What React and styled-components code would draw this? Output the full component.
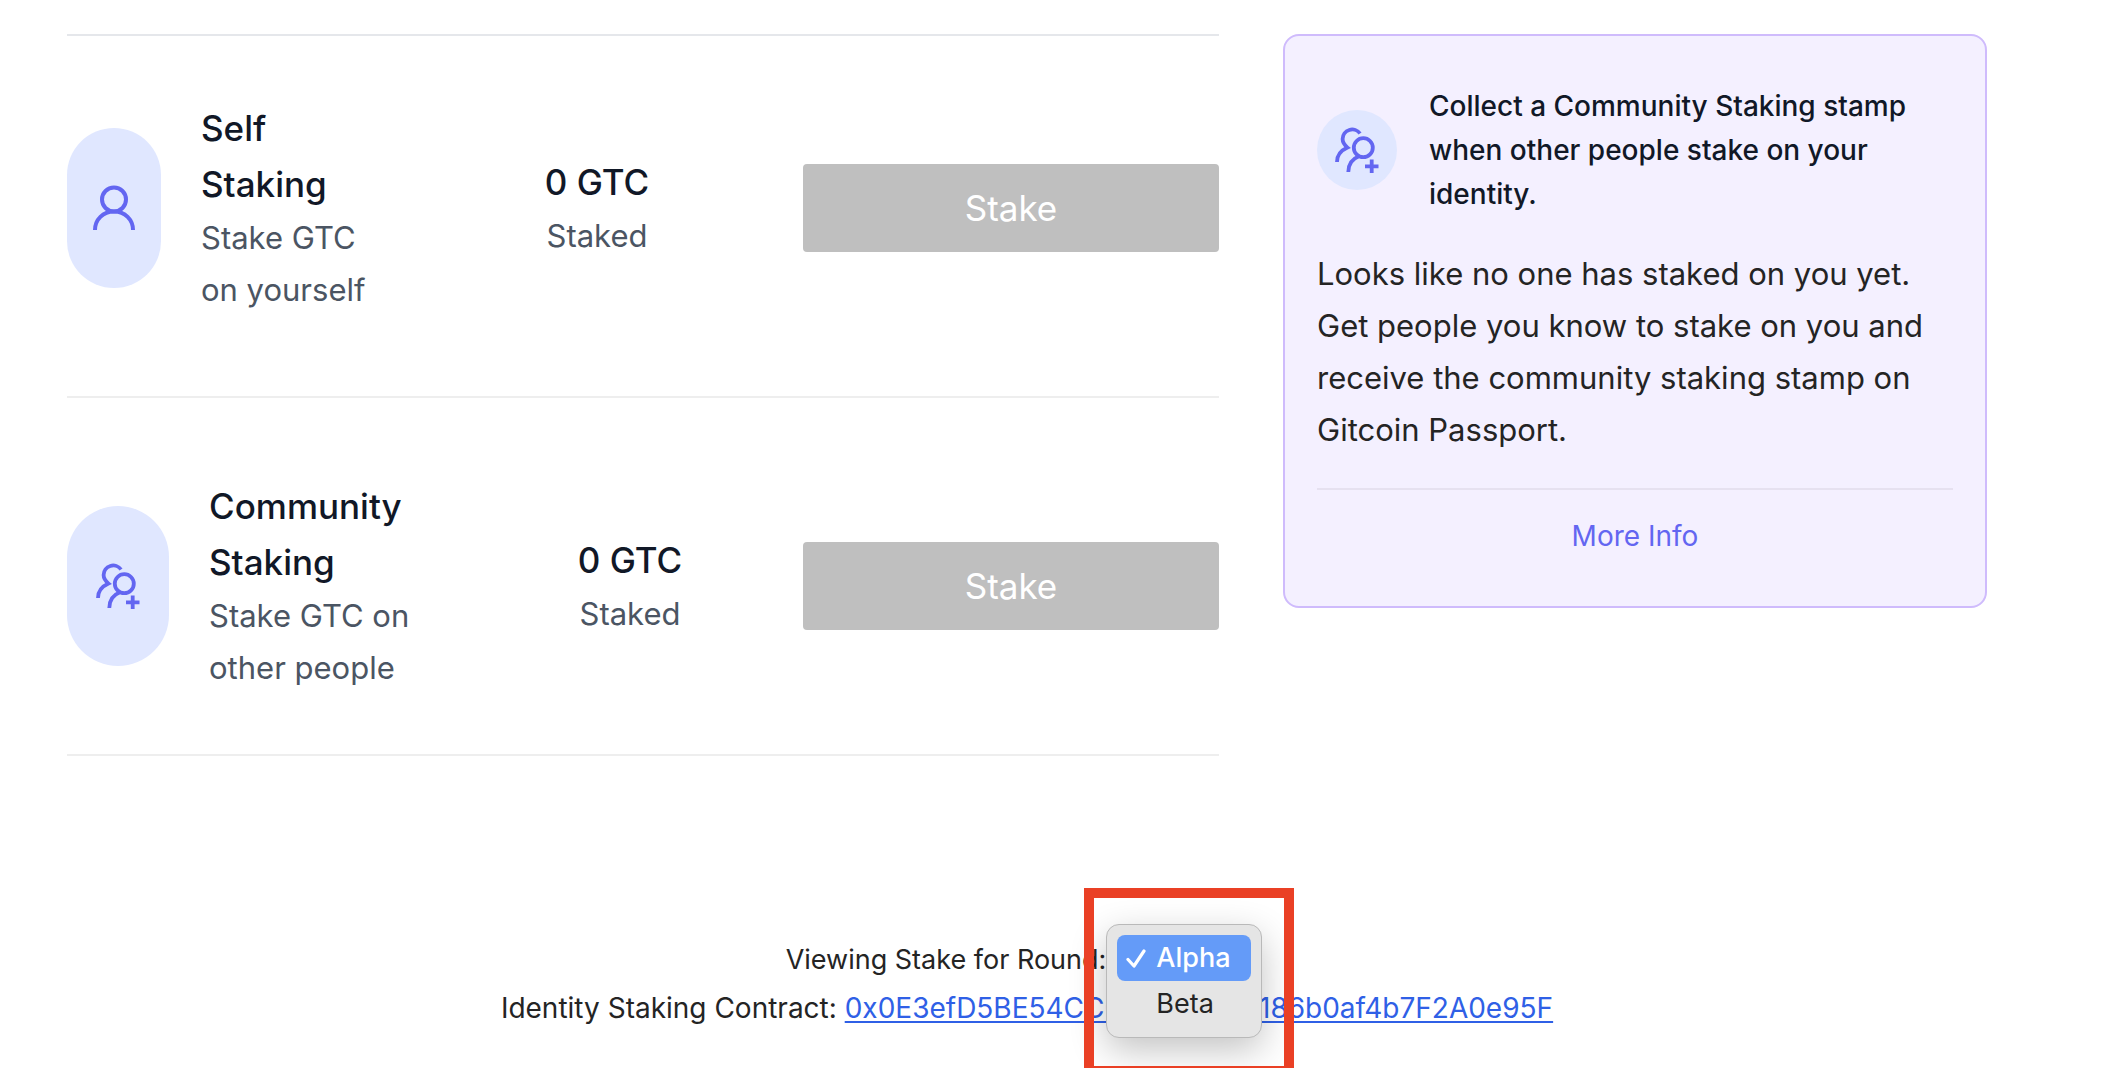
import React from "react";
import styled, { createGlobalStyle } from "styled-components";

const GlobalStyle = createGlobalStyle`
  *, *::before, *::after { box-sizing: border-box; }
  body {
    margin: 0;
    background: #fff;
    color: #242424;
    font-family: Inter, "Liberation Sans", sans-serif;
  }
  h2, h3, p { margin: 0; }
`;

const Page = styled.div`
  height: 100vh;
  overflow: hidden;
  padding: 34px 115px 0 67px;
`;

const Columns = styled.main`
  display: grid;
  grid-template-columns: 1152fr 704fr;
  gap: 64px;
  align-items: start;
`;

const StakeList = styled.section`
  border-top: 2px solid #e5e7eb;
`;

const StakeRow = styled.article`
  display: grid;
  grid-template-columns: ${(p) => p.$iconWidth}px ${(p) => p.$textWidth}px 1fr 416px;
  align-items: center;
  padding: ${(p) => p.$padding};
  border-bottom: 2px solid #eeeeee;
`;

const IconPill = styled.div`
  display: flex;
  align-items: center;
  justify-content: center;
  height: 160px;
  border-radius: 80px;
  background: #e0e7ff;
  color: #6366f1;
`;

const Info = styled.div`
  padding-left: 40px;
`;

const Stat = styled.div`
  padding-left: 20px;
  text-align: center;
`;

const Heading = styled.h2`
  color: #111827;
  font-size: 35px;
  font-weight: 500;
  line-height: 56px;
`;

const Muted = styled.p`
  color: #4b5563;
  font-size: 31px;
  line-height: 52px;
`;

const StakeButton = styled.button`
  height: 88px;
  border: 0;
  border-radius: 4px;
  background: #bfbfbf;
  color: #fff;
  font-family: inherit;
  font-size: 35px;
  line-height: 56px;
`;

const Card = styled.aside`
  padding: 48px 32px;
  border: 2px solid #cfbbfc;
  border-radius: 16px;
  background: #f4f0ff;
`;

const CardHeader = styled.div`
  display: flex;
  align-items: center;
  gap: 32px;
`;

const IconCircle = styled.div`
  display: flex;
  flex: none;
  align-items: center;
  justify-content: center;
  width: 80px;
  height: 80px;
  border-radius: 50%;
  background: #e0e7ff;
  color: #6366f1;
`;

const CardTitle = styled.h3`
  color: #111827;
  font-size: 28px;
  font-weight: 500;
  line-height: 44px;
`;

const CardText = styled.p`
  padding: 32px 0;
  font-size: 31px;
  line-height: 52px;
`;

const CardFooter = styled.div`
  padding-top: 24px;
  border-top: 2px solid #e6e1f0;
  text-align: center;
`;

const MoreLink = styled.a`
  display: block;
  color: #6366f1;
  font-size: 28px;
  line-height: 44px;
  text-decoration: none;
`;

const Footer = styled.footer`
  display: flex;
  flex-direction: column;
  align-items: center;
  padding-top: 180px;
  font-size: 28px;
  line-height: 48px;
`;

const RoundLine = styled.div`
  display: flex;
  font-size: 27px;
`;

const RoundPicker = styled.div`
  position: relative;
  width: 162px;
`;

const RoundSelect = styled.select`
  width: 160px;
  height: 48px;
  padding: 0 24px;
  border: 0;
  appearance: none;
  background: transparent;
  color: inherit;
  font: inherit;
`;

const Arrow = styled.svg`
  position: absolute;
  top: 18px;
  right: 6px;
  width: 14px;
  height: 8px;
`;

const Menu = styled.ul`
  position: absolute;
  top: -12px;
  left: 0;
  z-index: 1;
  width: 156px;
  margin: 0;
  padding: 10px;
  list-style: none;
  border: 1px solid #b9b9b9;
  border-radius: 13px;
  background: #e5e5e5;
  box-shadow: 0 12px 36px rgba(0, 0, 0, 0.24);
`;

const MenuItem = styled.li`
  display: flex;
  align-items: center;
  height: 46px;
  padding-left: 9px;
  gap: 10px;
  border-radius: 8px;
  background: ${(p) => (p.$selected ? "#649bf8" : "transparent")};
  color: ${(p) => (p.$selected ? "#fff" : "#242424")};
  font-weight: ${(p) => (p.$selected ? 500 : 400)};
`;

const Highlight = styled.div`
  position: absolute;
  top: -48px;
  left: -22px;
  z-index: 2;
  width: 210px;
  height: 188px;
  border: 10px solid #ea4025;
  pointer-events: none;
`;

const ContractLink = styled.a`
  color: #2f60e6;
  text-decoration: underline;
  text-decoration-thickness: 2px;
  text-underline-offset: 3px;
`;

function PersonIcon() {
  return (
    <svg width="44" height="46" viewBox="0 0 44 46" fill="none" stroke="currentColor" strokeWidth="4" aria-hidden="true">
      <circle cx="22" cy="14.5" r="12" />
      <path d="M3 45C3 34.5 11 26.5 22 26.5S41 34.5 41 45" />
    </svg>
  );
}

function PeoplePlusIcon() {
  return (
    <svg width="44" height="46" viewBox="0 0 44 46" fill="none" stroke="currentColor" strokeWidth="3.8" aria-hidden="true">
      <path d="M25 6.5A9.6 9.6 0 0 0 7.6 12C7.6 15.5 9.5 18 12.5 20.6C6 23.5 2 28.5 2 35" />
      <circle cx="28.3" cy="20.7" r="9.5" />
      <path d="M23.5 29.5C17 32 13.3 37.5 13.3 45" />
      <path d="M36.7 32.4V46M30 39.3H43.5" />
    </svg>
  );
}

function CheckIcon({ visible }) {
  return (
    <svg width="20" height="20" viewBox="0 0 20 20" fill="none" stroke="currentColor" strokeWidth="3.2" strokeLinecap="round" strokeLinejoin="round" aria-hidden="true">
      {visible && <path d="M2 11.5L8 18L18 3" />}
    </svg>
  );
}

const stakes = [
  {
    title: "Self Staking",
    text: "Stake GTC on yourself",
    icon: <PersonIcon />,
    iconWidth: 94,
    textWidth: 210,
    padding: "64px 0 80px",
  },
  {
    title: "Community Staking",
    text: "Stake GTC on other people",
    icon: <PeoplePlusIcon />,
    iconWidth: 102,
    textWidth: 268,
    padding: "80px 0 60px",
  },
];

const rounds = ["Alpha", "Beta"];

export default function App() {
  const [round, setRound] = React.useState("Alpha");

  return (
    <>
      <GlobalStyle />
      <Page>
        <Columns>
          <StakeList>
            {stakes.map((s) => (
              <StakeRow key={s.title} $iconWidth={s.iconWidth} $textWidth={s.textWidth} $padding={s.padding}>
                <IconPill>{s.icon}</IconPill>
                <Info>
                  <Heading>{s.title}</Heading>
                  <Muted>{s.text}</Muted>
                </Info>
                <Stat>
                  <Heading as="p">0 GTC</Heading>
                  <Muted>Staked</Muted>
                </Stat>
                <StakeButton type="button">Stake</StakeButton>
              </StakeRow>
            ))}
          </StakeList>
          <Card>
            <CardHeader>
              <IconCircle>
                <PeoplePlusIcon />
              </IconCircle>
              <CardTitle>Collect a Community Staking stamp when other people stake on your identity.</CardTitle>
            </CardHeader>
            <CardText>
              Looks like no one has staked on you yet. Get people you know to stake on you and receive the
              community staking stamp on Gitcoin Passport.
            </CardText>
            <CardFooter>
              <MoreLink href="#more-info">More Info</MoreLink>
            </CardFooter>
          </Card>
        </Columns>
        <Footer>
          <RoundLine>
            <label htmlFor="round">Viewing Stake for Round:</label>
            <RoundPicker>
              <RoundSelect id="round" value={round} onChange={(e) => setRound(e.target.value)}>
                {rounds.map((r) => (
                  <option key={r}>{r}</option>
                ))}
              </RoundSelect>
              <Arrow viewBox="0 0 14 8" fill="none" stroke="#242424" strokeWidth="2" aria-hidden="true">
                <path d="M1 1L7 7L13 1" />
              </Arrow>
              <Menu>
                {rounds.map((r) => (
                  <MenuItem key={r} $selected={r === round} onClick={() => setRound(r)}>
                    <CheckIcon visible={r === round} />
                    {r}
                  </MenuItem>
                ))}
              </Menu>
              <Highlight />
            </RoundPicker>
          </RoundLine>
          <div>
            Identity Staking Contract:{" "}
            <ContractLink href="#contract">0x0E3efD5BE54CC0f4C64e0D186b0af4b7F2A0e95F</ContractLink>
          </div>
        </Footer>
      </Page>
    </>
  );
}
